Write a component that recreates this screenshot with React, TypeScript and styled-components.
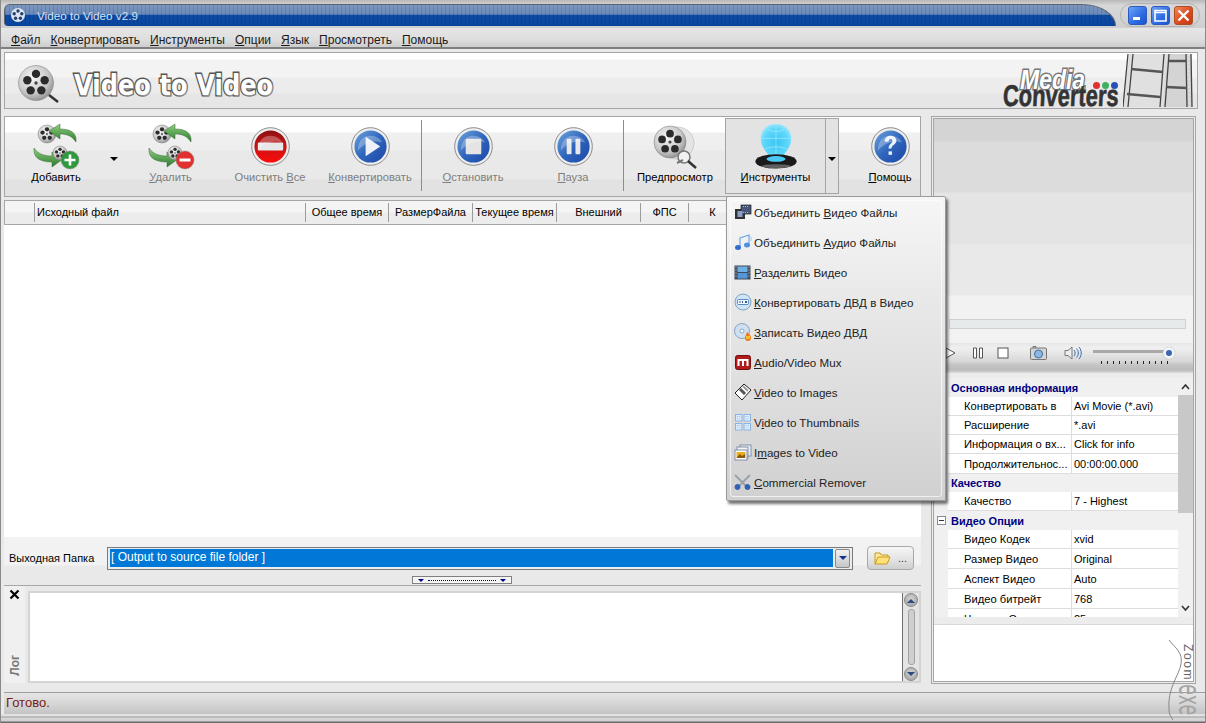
import React from "react";
import styled, { createGlobalStyle } from "styled-components";

const Global = createGlobalStyle`
  html, body { margin: 0; padding: 0; background: #e8e8e8; }
  * { box-sizing: border-box; }
`;

const Window = styled.div`
  width: 1206px;
  height: 723px;
  position: relative;
  overflow: hidden;
  display: flex;
  flex-direction: column;
  background: #e9e9e9;
  border-left: 1px solid #8a8a8a;
  border-right: 1px solid #8a8a8a;
  font-family: "Liberation Sans", Arial, sans-serif;
  font-size: 11px;
  color: #000;
`;

const TitleBar = styled.div`
  height: 28px;
  flex: none;
  display: flex;
  align-items: center;
  gap: 4px;
  padding: 4px 5px 2px 3px;
  background: linear-gradient(#b8b8b8, #d8d8d8 20%, #cfcfcf);
`;

const Caption = styled.div`
  flex: 1;
  height: 22px;
  display: flex;
  align-items: center;
  gap: 11px;
  padding-left: 4px;
  color: #d6e0ee;
  font-size: 11.7px;
  border: 1px solid #5a6470;
  border-bottom: 0;
  border-radius: 6px 34px 0 4px / 6px 22px 0 4px;
  background:
    repeating-linear-gradient(90deg, rgba(0, 0, 40, 0.12) 0 1px, transparent 1px 4px),
    linear-gradient(#7c97bf 0, #6b8ab8 45%, #0f4ba3 46%, #0b469e 100%);
`;

const WinButtons = styled.div`
  width: 80px;
  height: 24px;
  display: flex;
  align-items: center;
  justify-content: center;
  gap: 4px;
  border: 1px solid #b4b4b4;
  border-radius: 12px;
`;

const WinButton = styled.div<{ $close?: boolean }>`
  width: 19px;
  height: 19px;
  border-radius: 3px;
  display: flex;
  align-items: center;
  justify-content: center;
  border: 1px solid ${p => (p.$close ? "#b04a20" : "#2a5ac0")};
  background: ${p =>
    p.$close
      ? "linear-gradient(135deg, #ee8a5c, #d9481c 60%, #c23a14)"
      : "linear-gradient(135deg, #6fa4f4, #2d6be4 60%, #1c52cc)"};
`;

const MenuBar = styled.div`
  height: 21px;
  flex: none;
  display: flex;
  align-items: center;
  gap: 10px;
  padding: 5px 0 0 10px;
  font-size: 12px;
  color: #1a1a1a;
  background: linear-gradient(#e6e6e6, #dedede 60%, #cdcdcd);
  border-bottom: 2px solid #7f7f7f;
`;

const Banner = styled.div`
  height: 57px;
  flex: none;
  margin: 3px 7px 0 3px;
  display: flex;
  align-items: center;
  border: 1px solid #a6a6a6;
  padding: 0 4px 0 12px;
  background: linear-gradient(#fff 0, #fff 6px, #f3f3f3 7px, #f3f3f3 24px, #ececec 25px, #ececec 40px, #e6e6e6 41px);
`;

const LogoMark = styled.svg`
  flex: none;
  margin-top: 9px;
`;

const LogoText = styled.div`
  margin: 10px 0 0 13px;
  font-family: "DejaVu Sans", sans-serif;
  font-weight: 700;
  font-size: 28px;
  letter-spacing: 0.2px;
  color: #fff;
  -webkit-text-stroke: 3px #555;
  paint-order: stroke fill;
  text-shadow: 1px 1px 1px #999;
  white-space: nowrap;
  transform: scaleX(0.855);
  transform-origin: left;
`;

const BrandSpace = styled.div`
  flex: 1;
`;

const Brand = styled.div`
  position: relative;
  width: 120px;
  height: 55px;
  flex: none;
  font-style: italic;
  font-weight: 700;
`;

const BrandMedia = styled.div`
  position: absolute;
  top: 11px;
  left: 17px;
  font-size: 28px;
  color: #fff;
  -webkit-text-stroke: 3px #777;
  paint-order: stroke fill;
  transform: scaleX(0.82);
  transform-origin: left;
`;

const BrandConverters = styled.div`
  position: absolute;
  left: 0;
  bottom: -3px;
  font-size: 30px;
  line-height: 30px;
  color: #333;
  font-style: normal;
  transform: scaleX(0.73) skewX(-4deg);
  transform-origin: left;
  -webkit-text-stroke: 0.6px #333;
  white-space: nowrap;
`;

const BrandDots = styled.div`
  position: absolute;
  top: 29px;
  right: 5px;
  display: flex;
  gap: 2px;
`;

const BrandDot = styled.span<{ $c: string }>`
  width: 7px;
  height: 7px;
  border-radius: 50%;
  background: ${p => p.$c};
`;

const Main = styled.div`
  flex: 1;
  min-height: 0;
  display: flex;
  gap: 10px;
  padding: 7px 8px 0 3px;
`;

const LeftColumn = styled.div`
  width: 917px;
  flex: none;
  display: flex;
  flex-direction: column;
`;

const Toolbar = styled.div`
  height: 81px;
  flex: none;
  display: flex;
  padding: 1px 0 2px 1px;
  border: 1px solid #a6a6a6;
  background: linear-gradient(#fff 0, #fff 15px, #f0f0f0 16px, #eeeeee 33px, #e9e9e9 34px, #e9e9e9 62px, #e2e2e2 63px);
`;

const ToolButton = styled.div<{ $w: number; $off?: boolean; $pressed?: boolean; $ml?: number }>`
  width: ${p => p.$w}px;
  margin-left: ${p => p.$ml || 0}px;
  flex: none;
  display: flex;
  flex-direction: column;
  align-items: center;
  padding-top: 3px;
  font-size: 11.2px;
  color: ${p => (p.$off ? "#7d7d7d" : "#000")};
  border: 1px solid ${p => (p.$pressed ? "#a4a4a4" : "transparent")};
  background: ${p => (p.$pressed ? "#e3e3e3" : "transparent")};
`;

const ToolIcon = styled.div`
  width: 50px;
  height: 48px;
  padding-top: 1px;
  display: flex;
  align-items: center;
  justify-content: center;
`;

const ToolLabel = styled.div`
  height: 14px;
  line-height: 14px;
  white-space: nowrap;
`;

const ArrowButton = styled.div<{ $w: number; $pressed?: boolean }>`
  width: ${p => p.$w}px;
  flex: none;
  display: flex;
  justify-content: center;
  padding-top: 38px;
  border: 1px solid ${p => (p.$pressed ? "#a4a4a4" : "transparent")};
  border-left: 0;
  background: ${p => (p.$pressed ? "#e3e3e3" : "transparent")};
`;

const Caret = styled.span`
  width: 0;
  height: 0;
  border-left: 4px solid transparent;
  border-right: 4px solid transparent;
  border-top: 4px solid #000;
`;

const ToolSeparator = styled.div<{ $ml: number }>`
  width: 1px;
  margin: 2px 1px 3px ${p => p.$ml}px;
  flex: none;
  background: #8c8c8c;
`;

const ListHeader = styled.div`
  height: 25px;
  flex: none;
  margin-top: 3px;
  display: flex;
  align-items: center;
  border: 1px solid #a6a6a6;
  background: linear-gradient(#f4f4f4 0, #f4f4f4 11px, #ececec 12px);
`;

const HeaderCell = styled.div<{ $w: number; $left?: boolean }>`
  width: ${p => p.$w}px;
  flex: none;
  height: 19px;
  line-height: 18px;
  padding-left: ${p => (p.$left ? "2px" : "0")};
  text-align: ${p => (p.$left ? "left" : "center")};
  border-right: 1px solid #9c9c9c;
  white-space: nowrap;
  overflow: hidden;
`;

const ListBody = styled.div`
  flex: 1;
  background: #fff;
`;

const OutputRow = styled.div`
  height: 37px;
  flex: none;
  display: flex;
  align-items: center;
  padding: 5px 7px 0 5px;
  background: linear-gradient(#f2f2f2 0, #f2f2f2 28px, #e9e9e9 29px);
`;

const OutputLabel = styled.div`
  width: 98px;
  flex: none;
  margin-top: -1px;
`;

const FolderSelect = styled.div`
  width: 746px;
  height: 23px;
  flex: none;
  display: flex;
  align-items: center;
  gap: 2px;
  padding: 2px;
  border: 1px solid #7a7a7a;
  background: #ececec;
`;

const SelectValue = styled.div`
  flex: 1;
  height: 18px;
  line-height: 17px;
  padding-left: 1px;
  background: #0078d7;
  color: #fff;
  font-size: 12px;
`;

const SelectArrow = styled.div`
  width: 15px;
  height: 19px;
  display: flex;
  align-items: center;
  justify-content: center;
  border: 1px solid #8a8a8a;
  border-radius: 2px;
  background: linear-gradient(#f2f2f2, #c6c6c6);
`;

const BlueCaret = styled.span`
  width: 0;
  height: 0;
  border-left: 4px solid transparent;
  border-right: 4px solid transparent;
  border-top: 4px solid #14348c;
`;

const BrowseButton = styled.div`
  width: 47px;
  height: 24px;
  flex: none;
  margin-left: 14px;
  display: flex;
  align-items: center;
  gap: 7px;
  padding-left: 6px;
  border: 1px solid #a8a8a8;
  border-radius: 4px;
  color: #333;
  background: linear-gradient(#f6f6f6, #e2e2e2 60%, #cfcfcf);
`;

const Splitter = styled.div`
  height: 12px;
  flex: none;
  display: flex;
  align-items: flex-start;
  justify-content: center;
  padding-top: 2px;
  border-bottom: 1px solid #a8a8a8;
`;

const SplitHandle = styled.div`
  width: 100px;
  height: 8px;
  display: flex;
  align-items: center;
  gap: 4px;
  padding: 0 5px;
  margin-right: 1px;
  border: 1px solid #808080;
  background: #f4f4f4;
`;

const SplitCaret = styled.span`
  width: 0;
  height: 0;
  border-left: 3px solid transparent;
  border-right: 3px solid transparent;
  border-top: 3px solid #000080;
`;

const SplitDots = styled.span`
  flex: 1;
  border-top: 1px dotted #000080;
`;

const LogArea = styled.div`
  height: 98px;
  flex: none;
  display: flex;
  gap: 3px;
`;

const LogTab = styled.div`
  width: 21px;
  flex: none;
  display: flex;
  flex-direction: column;
  align-items: center;
  justify-content: space-between;
  padding: 3px 0 7px;
  background: #f0f0f0;
  margin-bottom: 1px;
`;

const LogLabel = styled.div`
  writing-mode: vertical-rl;
  transform: rotate(180deg);
  font-weight: 700;
  font-size: 12px;
  color: #777;
`;

const LogBox = styled.div`
  flex: 1;
  display: flex;
  margin-top: 5px;
  border: 2px solid #d4d4d4;
  background: #fff;
  height: 92px;
`;

const LogText = styled.div`
  flex: 1;
`;

const LogScroll = styled.div`
  width: 17px;
  flex: none;
  display: flex;
  flex-direction: column;
  align-items: center;
  justify-content: space-between;
  border-left: 1px solid #707070;
  background: #e4e4e4;
`;

const ScrollCap = styled.div`
  width: 14px;
  height: 14px;
  display: flex;
  align-items: center;
  justify-content: center;
  border-radius: 50%;
  border: 1px solid #8a8a8a;
  background: radial-gradient(circle at 50% 40%, #d4d4d4, #9a9a9a);
`;

const ScrollTrack = styled.div`
  width: 7px;
  flex: 1;
  margin: 2px 0;
  border: 1px solid #a2a2a2;
  border-radius: 3px;
  background: #cfcfcf;
`;

const RightColumn = styled.div`
  width: 265px;
  flex: none;
  height: 568px;
  display: flex;
  flex-direction: column;
  border: 3px double #a6a6a6;
  background: #ececec;
`;

const Preview = styled.div`
  flex: none;
  height: 224px;
  display: flex;
  flex-direction: column;
  justify-content: flex-end;
  padding: 0 7px 14px 15px;
  background: linear-gradient(
    #d4d4d4 0, #d4d4d4 22px, #dcdcdc 23px, #dcdcdc 73px, #e4e4e4 74px, #e4e4e4 125px,
    #e9e9e9 126px, #e9e9e9 176px, #f2f2f2 177px, #f2f2f2 224px
  );
`;

const SeekBar = styled.div`
  height: 10px;
  border: 1px solid #cdd2d2;
  background: #e6eaea;
`;

const Controls = styled.div`
  height: 30px;
  flex: none;
  display: flex;
  align-items: center;
  padding: 0 0 10px 3px;
  background: linear-gradient(#e6e6e6 0, #f0f0f0 5px, #d8d8d8 18px, #c4c4c4 22px, #bcbcbc 27px, #dcdcdc 30px);
`;

const CtrlSlot = styled.div<{ $w: number }>`
  width: ${p => p.$w}px;
  flex: none;
  display: flex;
  justify-content: center;
`;

const Volume = styled.div`
  position: relative;
  width: 79px;
  height: 20px;
  margin-left: 11px;
  flex: none;
`;

const VolumeTrack = styled.div`
  margin-top: 7px;
  height: 3px;
  background: #a8a8a8;
`;

const VolumeThumb = styled.div`
  position: absolute;
  right: -3px;
  top: 4px;
  width: 12px;
  height: 12px;
  border-radius: 50%;
  border: 3.5px solid #f2f4f8;
  background: #3a66b0;
  box-shadow: 0 0 1px #999;
`;

const VolumeTicks = styled.div`
  margin: 8px 0 0 8px;
  height: 3px;
  background: repeating-linear-gradient(90deg, #222 0 1px, transparent 1px 6px);
`;

const GridWrap = styled.div`
  flex: none;
  height: 239px;
  margin: 5px 0 0 1px;
  display: flex;
  overflow: hidden;
`;

const Grid = styled.div`
  width: 243px;
  flex: none;
  overflow: hidden;
`;

const SectionRow = styled.div<{ $h: number }>`
  height: ${p => p.$h}px;
  display: flex;
  align-items: center;
  background: #f0f0f0;
  color: #000080;
  font-weight: 700;
`;

const Expander = styled.div<{ $show?: boolean }>`
  width: 15px;
  flex: none;
  margin-right: 1px;
  padding-left: 2px;
  opacity: ${p => (p.$show ? 1 : 0)};
`;

const ExpanderBox = styled.div`
  width: 9px;
  height: 9px;
  display: flex;
  align-items: center;
  justify-content: center;
  border: 1px solid #7f8fa0;
  background: #fff;
`;

const ExpanderMinus = styled.span`
  width: 5px;
  height: 1px;
  background: #333;
`;

const PropRow = styled.div<{ $h: number }>`
  height: ${p => p.$h}px;
  display: flex;
  background: #f0f0f0;
`;

const PropName = styled.div`
  width: 124px;
  margin-left: 13px;
  flex: none;
  display: flex;
  align-items: center;
  padding-left: 16px;
  background: #fff;
  border-bottom: 1px solid #ddd;
  border-right: 1px solid #ddd;
  white-space: nowrap;
  overflow: hidden;
  font-size: 11.2px;
`;

const PropValue = styled.div`
  flex: 1;
  display: flex;
  align-items: center;
  padding-left: 2px;
  background: #fff;
  border-bottom: 1px solid #ddd;
`;

const GridScroll = styled.div`
  width: 15px;
  flex: none;
  display: flex;
  flex-direction: column;
  align-items: center;
  background: #f0f0f0;
`;

const GridScrollArrow = styled.div`
  height: 17px;
  flex: none;
  display: flex;
  align-items: center;
  justify-content: center;
`;

const GridThumb = styled.div`
  width: 100%;
  height: 118px;
  flex: none;
  background: #c8c8c8;
`;

const GridScrollRest = styled.div`
  flex: 1;
`;

const DescBox = styled.div`
  height: 57px;
  flex: none;
  margin-top: 7px;
  background: #fff;
  border-top: 1px solid #d8d8d8;
`;

const Watermark = styled.div`
  position: absolute;
  right: 4px;
  top: 640px;
  width: 36px;
  height: 80px;
  pointer-events: none;
`;

const WatermarkZoom = styled.div`
  position: absolute;
  right: 6px;
  top: 4px;
  writing-mode: vertical-rl;
  font-size: 12px;
  letter-spacing: 1.6px;
  color: #666;
`;

const WatermarkExe = styled.div`
  position: absolute;
  right: 0;
  bottom: 5px;
  writing-mode: vertical-rl;
  font-size: 30px;
  line-height: 24px;
  font-family: "DejaVu Sans", sans-serif;
  color: #a4a4a4;
  transform: scaleY(0.58);
  transform-origin: bottom;
`;

const StatusBar = styled.div`
  height: 22px;
  flex: none;
  margin: 8px 0 0 3px;
  padding: 0 0 3px 2px;
  display: flex;
  align-items: center;
  border-top: 1px solid #9c9c9c;
  color: #7a1a10;
  font-size: 13px;
  background: linear-gradient(#e6e6e6, #d6d6d6 50%, #c4c4c4);
`;

const BottomEdge = styled.div`
  flex: none;
  height: 9px;
  background: linear-gradient(#e2e2e2 0, #e2e2e2 2px, #9a9a9a 3px, #d8d8d8 4px, #d0d0d0 7px, #6a6a6a 8px);
`;

const DropMenu = styled.div`
  position: absolute;
  left: 725px;
  top: 196px;
  width: 220px;
  height: 305px;
  padding: 0 4px;
  border: 1px solid #9a9a9a;
  border-radius: 2px;
  box-shadow: 2px 3px 3px rgba(0, 0, 0, 0.55);
  background: linear-gradient(#f6f6f6, #e8e8e8 35%, #dcdcdc 70%, #d0d0d0);

  &::before {
    content: "";
    position: absolute;
    inset: 3px;
    border: 1px solid rgba(255, 255, 255, 0.65);
    border-radius: 3px;
  }
`;

const MenuItem = styled.div`
  position: relative;
  height: 30px;
  display: flex;
  align-items: center;
  gap: 2px;
  padding-left: 2px;
  font-size: 11.6px;
  color: #222;
  white-space: nowrap;
`;

const MenuIcon = styled.div`
  width: 19px;
  height: 18px;
  flex: none;
  display: flex;
  align-items: center;
  justify-content: center;
`;

const DefsHolder = styled.svg`
  position: absolute;
  width: 0;
  height: 0;
`;

const Defs = () => (
  <DefsHolder aria-hidden>
    <defs>
      <radialGradient id="reel" cx="40%" cy="35%" r="75%">
        <stop offset="0" stopColor="#f8f8f8" />
        <stop offset="0.6" stopColor="#c8c8c8" />
        <stop offset="1" stopColor="#808080" />
      </radialGradient>
      <linearGradient id="green" x1="0" y1="0" x2="0" y2="1">
        <stop offset="0" stopColor="#8fd07f" />
        <stop offset="1" stopColor="#2d7a2d" />
      </linearGradient>
      <linearGradient id="orbRed" x1="0" y1="0" x2="0" y2="1">
        <stop offset="0" stopColor="#8c1010" />
        <stop offset="0.5" stopColor="#c81414" />
        <stop offset="1" stopColor="#ff0a0a" />
      </linearGradient>
      <linearGradient id="orbBlue" x1="0" y1="0" x2="1" y2="1">
        <stop offset="0" stopColor="#6ea4dc" />
        <stop offset="0.5" stopColor="#2f66bc" />
        <stop offset="1" stopColor="#1c46a8" />
      </linearGradient>
      <radialGradient id="holo" cx="50%" cy="55%" r="60%">
        <stop offset="0" stopColor="#38c4f4" />
        <stop offset="0.7" stopColor="#62d8fb" />
        <stop offset="1" stopColor="#a8ecfd" />
      </radialGradient>
    </defs>
  </DefsHolder>
);

// five-hole film reel, drawn around (cx, cy)
const Reel = ({ cx, cy, r }: { cx: number; cy: number; r: number }) => {
  const holes = [0, 72, 144, 216, 288].map(a => {
    const t = ((a - 90) * Math.PI) / 180;
    return [cx + Math.cos(t) * r * 0.52, cy + Math.sin(t) * r * 0.52];
  });
  return (
    <g>
      <circle cx={cx} cy={cy} r={r} fill="url(#reel)" stroke="#777" strokeWidth="0.5" />
      {holes.map(([x, y], i) => (
        <circle key={i} cx={x} cy={y} r={r * 0.24} fill="#2b2b2b" />
      ))}
      <circle cx={cx} cy={cy} r={r * 0.1} fill="#444" />
    </g>
  );
};

const SwapIcon = ({ badge }: { badge: "plus" | "minus" }) => (
  <svg width="48" height="48" viewBox="0 0 48 48">
    <Reel cx={15} cy={11} r={9} />
    <path d="M44 19c1-9-5-13-16-13V1L17 8l11 8v-5c7 0 12 2 16 8z" fill="url(#green)" stroke="#3a6a3a" strokeWidth="0.5" />
    <path d="M2 25c-1 9 5 14 18 14v5l11-8-11-7v4c-8 0-14-2-18-8z" fill="url(#green)" stroke="#3a6a3a" strokeWidth="0.5" />
    <Reel cx={28} cy={30} r={7} />
    <circle cx={38} cy={37} r={9} fill={badge === "plus" ? "#2f9a3c" : "#e23030"} stroke="#888" strokeWidth="0.5" />
    {badge === "plus" ? (
      <path d="M38 31.5v11M32.5 37h11" stroke="#fff" strokeWidth="2.6" />
    ) : (
      <path d="M32.5 37h11" stroke="#fff" strokeWidth="3" />
    )}
  </svg>
);

const Orb = ({ fill, children }: { fill: string; children: React.ReactNode }) => (
  <svg width="39" height="39" viewBox="0 0 40 40">
    <circle cx="20" cy="20" r="19.3" fill="#eee" stroke="#8a8a8a" strokeWidth="1" />
    <circle cx="20" cy="20" r="16.5" fill={`url(#${fill})`} />
    {children}
  </svg>
);

const Gloss = () => <path d="M7 24c0-9 5-15 13-15 6 0 10 3 12 7-10-3-18 1-25 8z" fill="#fff" opacity="0.28" />;

const PreviewIcon = () => (
  <svg width="48" height="48" viewBox="0 0 48 48">
    <ellipse cx="26" cy="20" rx="17" ry="16" fill="#e4e4e4" stroke="#aaa" strokeWidth="0.5" />
    <Reel cx={19} cy={19} r={16} />
    <circle cx="33" cy="34" r="6" fill="#f2f2f2" stroke="#777" strokeWidth="1.5" />
    <path d="M37 38l8 7" stroke="#333" strokeWidth="2.5" />
    <path d="M26 40l6-3" stroke="#777" strokeWidth="2" />
  </svg>
);

const HoloIcon = () => (
  <svg width="46" height="46" viewBox="0 0 46 48">
    <path d="M23 0c10 0 16 7 16 15 0 9-6 13-10 21H17c-4-8-10-12-10-21C7 7 13 0 23 0z" fill="url(#holo)" />
    <path d="M8 15h30M23 0v36M14 5c5 4 13 4 18 0M12 26c6-3 16-3 22 0" stroke="#9ae8fc" strokeWidth="0.8" fill="none" />
    <ellipse cx="23" cy="39" rx="21.5" ry="7.5" fill="#1a1a1a" />
    <ellipse cx="23" cy="36.5" rx="10" ry="3" fill="#4cc8f4" />
    <ellipse cx="23" cy="44" rx="15" ry="2" fill="#606060" />
  </svg>
);

const menuIcons: React.ReactNode[] = [
  <svg key="0" width="18" height="16" viewBox="0 0 18 16">
    <rect x="1" y="5" width="10" height="10" fill="#333" />
    <rect x="7" y="1" width="10" height="9" fill="#46577a" stroke="#222" strokeWidth="0.7" />
    <rect x="3.5" y="7" width="5" height="6" fill="#8aa0c8" />
    <path d="M9 2.5h6M9 8.5h6" stroke="#ccc" strokeWidth="0.8" strokeDasharray="1 1" />
  </svg>,
  <svg key="1" width="18" height="18" viewBox="0 0 18 18">
    <path d="M6 14V5l9-3v9" fill="none" stroke="#6ea4e8" strokeWidth="1.2" />
    <path d="M15 2c1 2 3 2 2 6" fill="none" stroke="#9cc4f0" strokeWidth="1" />
    <ellipse cx="4" cy="14.5" rx="3" ry="2.5" fill="#2f6ccc" />
    <ellipse cx="13" cy="12" rx="3" ry="2.5" fill="#4f8fe0" />
  </svg>,
  <svg key="2" width="17" height="15" viewBox="0 0 17 15">
    <rect x="0.5" y="0.5" width="16" height="14" fill="#3c4a5a" />
    <rect x="3.5" y="1.5" width="10" height="5.5" fill="#6fb0e4" />
    <rect x="3.5" y="8" width="10" height="5.5" fill="#5298d8" />
    <path d="M1.5 2h1M1.5 5h1M1.5 8h1M1.5 11h1M14.5 2h1M14.5 5h1M14.5 8h1M14.5 11h1" stroke="#ddd" />
  </svg>,
  <svg key="3" width="18" height="18" viewBox="0 0 18 18">
    <circle cx="9" cy="9" r="8" fill="#cfe4f4" stroke="#7ea4c8" />
    <rect x="3.5" y="6.5" width="11" height="5" rx="1" fill="#f4f8fc" stroke="#3a6ea8" strokeWidth="0.8" />
    <path d="M5.5 8h1v2h-1zM8 8h1v2H8zM11 8h2v2h-2z" fill="#2a5a98" />
  </svg>,
  <svg key="4" width="18" height="18" viewBox="0 0 18 18">
    <circle cx="8" cy="8" r="7.5" fill="#cfe0f0" stroke="#8aa4c0" />
    <circle cx="8" cy="8" r="2" fill="#fff" stroke="#8aa4c0" />
    <path d="M13 9c2 2 4 3 4 6a3 3 0 0 1-6 0c0-2 1-3 2-6z" fill="#f07818" />
    <path d="M12 13h4v3h-4z" fill="#f8c020" />
  </svg>,
  <svg key="5" width="16" height="15" viewBox="0 0 16 15">
    <rect x="0.5" y="0.5" width="15" height="14" rx="2" fill="#b01c1c" stroke="#701010" />
    <path d="M3.5 11V5h9v6M8 5v6" fill="none" stroke="#fff" strokeWidth="2" />
  </svg>,
  <svg key="6" width="18" height="18" viewBox="0 0 18 18">
    <path d="M1 10l9-9 7 6-9 10z" fill="#fff" stroke="#222" strokeWidth="1" />
    <path d="M6 6l5 5" stroke="#555" strokeWidth="3" />
    <path d="M9 3l5 5" stroke="#999" strokeWidth="2" />
  </svg>,
  <svg key="7" width="16" height="17" viewBox="0 0 16 17">
    {[[0.5, 0.5], [9, 0.5], [0.5, 9.5], [9, 9.5]].map(([x, y], i) => (
      <g key={i}>
        <rect x={x} y={y} width="6.5" height="6.5" fill="#dcecfa" stroke="#8cb4e0" />
        <rect x={x + 2} y={y + 2} width="2.5" height="2" fill="#fff" stroke="#8cb4e0" strokeWidth="0.5" />
      </g>
    ))}
  </svg>,
  <svg key="8" width="18" height="17" viewBox="0 0 18 17">
    <rect x="6" y="1" width="11" height="11" fill="#eef2f8" stroke="#7f8fa8" />
    <rect x="3" y="3" width="11" height="11" fill="#f4f4f4" stroke="#7f8fa8" />
    <rect x="1" y="6" width="12" height="10" fill="#fff" stroke="#7f8fa8" />
    <rect x="2.5" y="8" width="9" height="6" fill="#e8b020" />
    <path d="M3 13l3-3 2 2 3-2v4H3z" fill="#8a5a10" />
  </svg>,
  <svg key="9" width="19" height="17" viewBox="0 0 19 17">
    <path d="M2 1l11 11M17 1L6 12" stroke="#9aa0a8" strokeWidth="1.8" />
    <circle cx="4.5" cy="13" r="2.5" fill="#2f62b4" stroke="#2f62b4" strokeWidth="1" />
    <circle cx="14.5" cy="13" r="2.5" fill="#2f62b4" stroke="#2f62b4" strokeWidth="1" />
  </svg>,
];

const menuItems: [string, string, string, number][] = [
  ["Объединить ", "В", "идео Файлы", 0],
  ["Объединить ", "А", "удио Файлы", 1],
  ["", "Р", "азделить Видео", 2],
  ["", "К", "онвертировать ДВД в Видео", 3],
  ["", "З", "аписать Видео ДВД", 4],
  ["", "A", "udio/Video Mux", 5],
  ["", "V", "ideo to Images", 6],
  ["V", "i", "deo to Thumbnails", 7],
  ["I", "m", "ages to Video", 8],
  ["", "C", "ommercial Remover", 9],
];

const headerCells: [string, number, boolean?][] = [
  ["", 30],
  ["Исходный файл", 271, true],
  ["Общее время", 83],
  ["РазмерФайла", 84],
  ["Текущее время", 84],
  ["Внешний", 84],
  ["ФПС", 48],
  ["К", 48],
];

type Row = { name: string; value: string; h: number } | { section: string; h: number; open?: boolean };

const rows: Row[] = [
  { section: "Основная информация", h: 19 },
  { name: "Конвертировать в", value: "Avi Movie (*.avi)", h: 19 },
  { name: "Расширение", value: "*.avi", h: 19 },
  { name: "Информация о вх...", value: "Click for info", h: 19 },
  { name: "Продолжительнос...", value: "00:00:00.000", h: 20 },
  { section: "Качество", h: 18 },
  { name: "Качество", value: "7 - Highest", h: 19 },
  { section: "Видео Опции", h: 19, open: true },
  { name: "Видео Кодек", value: "xvid", h: 19 },
  { name: "Размер Видео", value: "Original", h: 20 },
  { name: "Аспект Видео", value: "Auto", h: 20 },
  { name: "Видео битрейт", value: "768", h: 20 },
  { name: "Частота Ссылок", value: "25", h: 20 },
];

const Chevron = ({ up }: { up?: boolean }) => (
  <svg width="9" height="7" viewBox="0 0 9 7">
    <path d={up ? "M1 6l3.5-4L8 6" : "M1 1l3.5 4L8 1"} fill="none" stroke="#333" strokeWidth="1.6" />
  </svg>
);

export default function App() {
  return (
    <Window>
      <Global />
      <Defs />
      <TitleBar>
        <Caption>
          <svg width="17" height="17" viewBox="0 0 17 17">
            <circle cx="9" cy="8" r="7" fill="#dfe6f0" />
            {[[9, 4], [12.8, 6.8], [11.4, 11.2], [6.6, 11.2], [5.2, 6.8]].map(([x, y], i) => (
              <circle key={i} cx={x} cy={y} r="1.7" fill="#23406e" />
            ))}
          </svg>
          <span>Video to Video v2.9</span>
        </Caption>
        <WinButtons>
          <WinButton>
            <svg width="11" height="11" viewBox="0 0 11 11"><rect x="1" y="7" width="7" height="3" fill="#fff" /></svg>
          </WinButton>
          <WinButton>
            <svg width="13" height="13" viewBox="0 0 13 13"><path d="M1 1.5h11v10.5H1z M1 3.5h11" fill="none" stroke="#fff" strokeWidth="1.6" /></svg>
          </WinButton>
          <WinButton $close>
            <svg width="13" height="13" viewBox="0 0 13 13"><path d="M1.5 1.5l10 10M11.5 1.5l-10 10" stroke="#fff" strokeWidth="2.4" /></svg>
          </WinButton>
        </WinButtons>
      </TitleBar>

      <MenuBar>
        <span><u>Ф</u>айл</span>
        <span><u>К</u>онвертировать</span>
        <span><u>И</u>нструменты</span>
        <span><u>О</u>пции</span>
        <span><u>Я</u>зык</span>
        <span><u>П</u>росмотреть</span>
        <span><u>П</u>омощь</span>
      </MenuBar>

      <Banner>
        <LogoMark width="44" height="44" viewBox="0 0 44 44">
          <Reel cx={19} cy={20} r={17.5} />
          <path d="M32 32l9 7" stroke="#333" strokeWidth="2.5" />
        </LogoMark>
        <LogoText>Video to Video</LogoText>
        <BrandSpace />
        <Brand>
          <BrandMedia>Media</BrandMedia>
          <BrandConverters>Converters</BrandConverters>
          <BrandDots>
            <BrandDot $c="#e03030" />
            <BrandDot $c="#40b060" />
            <BrandDot $c="#2850b8" />
          </BrandDots>
        </Brand>
        <svg width="70" height="53" viewBox="0 0 70 53">
          <path d="M6 0h38l-3 53H0z" fill="#e0e0e0" />
          <path d="M44 0h24l1 53H40z" fill="#d4d4d4" />
          <path d="M5 0L0 53M10 0L5 53M41 0l-4 53M46 0l-4 53M63 0l1 53M68 0l1 53" stroke="#444" strokeWidth="1.3" />
          <path d="M7 0L2 53M43.5 0l-4 53M65.5 0l1 53" stroke="#ddd" strokeWidth="2" strokeDasharray="2 2" />
          <path d="M8 15l32 3M4 40l33 3M46 7l17 0M43 33l21 1" stroke="#555" strokeWidth="2.5" />
        </svg>
      </Banner>

      <Main>
        <LeftColumn>
          <Toolbar>
            <ToolButton $w={100}>
              <ToolIcon><SwapIcon badge="plus" /></ToolIcon>
              <ToolLabel><u>Д</u>обавить</ToolLabel>
            </ToolButton>
            <ArrowButton $w={16}><Caret /></ArrowButton>
            <ToolButton $w={97} $off>
              <ToolIcon><SwapIcon badge="minus" /></ToolIcon>
              <ToolLabel><u>У</u>далить</ToolLabel>
            </ToolButton>
            <ToolButton $w={102} $off>
              <ToolIcon>
                <Orb fill="orbRed">
                  <rect x="7" y="16" width="26" height="8" rx="1" fill="#e8e8e8" />
                  <Gloss />
                </Orb>
              </ToolIcon>
              <ToolLabel>Очистить <u>В</u>се</ToolLabel>
            </ToolButton>
            <ToolButton $w={98} $off>
              <ToolIcon>
                <Orb fill="orbBlue">
                  <path d="M15 10l15 10-15 10z" fill="#eef2f8" />
                  <Gloss />
                </Orb>
              </ToolIcon>
              <ToolLabel><u>К</u>онвертировать</ToolLabel>
            </ToolButton>
            <ToolSeparator $ml={2} />
            <ToolButton $w={100} $off>
              <ToolIcon>
                <Orb fill="orbBlue">
                  <rect x="12" y="12" width="16" height="16" rx="1" fill="#e4e4e4" />
                  <Gloss />
                </Orb>
              </ToolIcon>
              <ToolLabel><u>О</u>становить</ToolLabel>
            </ToolButton>
            <ToolButton $w={100} $off>
              <ToolIcon>
                <Orb fill="orbBlue">
                  <rect x="13" y="12" width="5" height="16" rx="1" fill="#e8e8e8" />
                  <rect x="22" y="12" width="5" height="16" rx="1" fill="#e8e8e8" />
                  <Gloss />
                </Orb>
              </ToolIcon>
              <ToolLabel><u>П</u>ауза</ToolLabel>
            </ToolButton>
            <ToolSeparator $ml={0} />
            <ToolButton $w={100}>
              <ToolIcon><PreviewIcon /></ToolIcon>
              <ToolLabel>Предпросмотр</ToolLabel>
            </ToolButton>
            <ToolButton $w={101} $pressed>
              <ToolIcon><HoloIcon /></ToolIcon>
              <ToolLabel><u>И</u>нструменты</ToolLabel>
            </ToolButton>
            <ArrowButton $w={13} $pressed><Caret /></ArrowButton>
            <ToolButton $w={60} $ml={21}>
              <ToolIcon>
                <Orb fill="orbBlue">
                  <path d="M14 15c0-4 3-6 6-6s6 2 6 5c0 4-5 4-5 8h-3c0-5 4-5 4-8 0-1-1-2-2-2s-2 1-2 3z" fill="#eef2f8" />
                  <rect x="18" y="25" width="3.5" height="3.5" fill="#eef2f8" />
                  <Gloss />
                </Orb>
              </ToolIcon>
              <ToolLabel><u>П</u>омощь</ToolLabel>
            </ToolButton>
          </Toolbar>

          <ListHeader>
            {headerCells.map(([label, w, left], i) => (
              <HeaderCell key={i} $w={w} $left={left}>{label}</HeaderCell>
            ))}
          </ListHeader>
          <ListBody />

          <OutputRow>
            <OutputLabel>Выходная Папка</OutputLabel>
            <FolderSelect>
              <SelectValue>[ Output to source file folder ]</SelectValue>
              <SelectArrow><BlueCaret /></SelectArrow>
            </FolderSelect>
            <BrowseButton>
              <svg width="17" height="14" viewBox="0 0 17 14">
                <path d="M1 13V2h5l1.5 2H14v2" fill="#ffe9a0" stroke="#c89a18" />
                <path d="M1 13l3-7h12l-3 7z" fill="#ffe27a" stroke="#c89a18" />
              </svg>
              <span>...</span>
            </BrowseButton>
          </OutputRow>

          <Splitter>
            <SplitHandle>
              <SplitCaret />
              <SplitDots />
              <SplitCaret />
            </SplitHandle>
          </Splitter>

          <LogArea>
            <LogTab>
              <svg width="11" height="11" viewBox="0 0 11 11">
                <path d="M1.5 1.5l8 8M9.5 1.5l-8 8" stroke="#000" strokeWidth="2.2" />
              </svg>
              <LogLabel>Лог</LogLabel>
            </LogTab>
            <LogBox>
              <LogText />
              <LogScroll>
                <ScrollCap>
                  <svg width="8" height="5" viewBox="0 0 8 5"><path d="M0 5l4-4 4 4z" fill="#2a4a80" /></svg>
                </ScrollCap>
                <ScrollTrack />
                <ScrollCap>
                  <svg width="8" height="5" viewBox="0 0 8 5"><path d="M0 0l4 4 4-4z" fill="#2a4a80" /></svg>
                </ScrollCap>
              </LogScroll>
            </LogBox>
          </LogArea>
        </LeftColumn>

        <RightColumn>
          <Preview>
            <SeekBar />
          </Preview>
          <Controls>
            <CtrlSlot $w={25}>
              <svg width="12" height="12" viewBox="0 0 12 12"><path d="M2 1l9 5-9 5z" fill="#fff" stroke="#555" /></svg>
            </CtrlSlot>
            <CtrlSlot $w={31}>
              <svg width="12" height="12" viewBox="0 0 12 12"><path d="M1.5 1h3v10h-3zM7.5 1h3v10h-3z" fill="#fff" stroke="#555" /></svg>
            </CtrlSlot>
            <CtrlSlot $w={19}>
              <svg width="12" height="12" viewBox="0 0 12 12"><rect x="1" y="1" width="10" height="10" fill="#fff" stroke="#555" /></svg>
            </CtrlSlot>
            <CtrlSlot $w={52}>
              <svg width="17" height="14" viewBox="0 0 17 14">
                <rect x="0.5" y="2" width="16" height="11.5" rx="1" fill="#d4d4d4" stroke="#777" />
                <path d="M3 2V0.5h3V2" fill="#aaa" stroke="#777" />
                <circle cx="8.5" cy="8" r="4" fill="#8fb8e0" stroke="#3a6ea8" />
              </svg>
            </CtrlSlot>
            <CtrlSlot $w={18}>
              <svg width="18" height="14" viewBox="0 0 18 14">
                <path d="M1 4.5h3L8 1v12L4 9.5H1z" fill="#eee" stroke="#777" />
                <path d="M10 4c1.5 2 1.5 4 0 6M12.5 2.5c2.5 3 2.5 6 0 9M15 1c3 4 3 8 0 12" fill="none" stroke="#3a6ea8" />
              </svg>
            </CtrlSlot>
            <Volume>
              <VolumeTrack />
              <VolumeThumb />
              <VolumeTicks />
            </Volume>
          </Controls>
          <GridWrap>
            <Grid>
              {rows.map((row, i) =>
                "section" in row ? (
                  <SectionRow key={i} $h={row.h}>
                    <Expander $show={row.open}>
                      <ExpanderBox><ExpanderMinus /></ExpanderBox>
                    </Expander>
                    {row.section}
                  </SectionRow>
                ) : (
                  <PropRow key={i} $h={row.h}>
                    <PropName>{row.name}</PropName>
                    <PropValue>{row.value}</PropValue>
                  </PropRow>
                )
              )}
            </Grid>
            <GridScroll>
              <GridScrollArrow><Chevron up /></GridScrollArrow>
              <GridThumb />
              <GridScrollRest />
              <GridScrollArrow><Chevron /></GridScrollArrow>
            </GridScroll>
          </GridWrap>
          <DescBox />
        </RightColumn>
      </Main>

      <StatusBar>Готово.</StatusBar>
      <BottomEdge />

      <Watermark>
        <svg width="36" height="80" viewBox="0 0 36 80">
          <path d="M4 0c6 8 14 12 12 24C14 36 2 48 4 70c0 4 2 7 4 10" fill="none" stroke="#888" strokeWidth="1" />
        </svg>
        <WatermarkZoom>Zoom</WatermarkZoom>
        <WatermarkExe>exe</WatermarkExe>
      </Watermark>

      <DropMenu>
        {menuItems.map(([a, u, b, icon], i) => (
          <MenuItem key={i}>
            <MenuIcon>{menuIcons[icon]}</MenuIcon>
            <span>{a}<u>{u}</u>{b}</span>
          </MenuItem>
        ))}
      </DropMenu>
    </Window>
  );
}
